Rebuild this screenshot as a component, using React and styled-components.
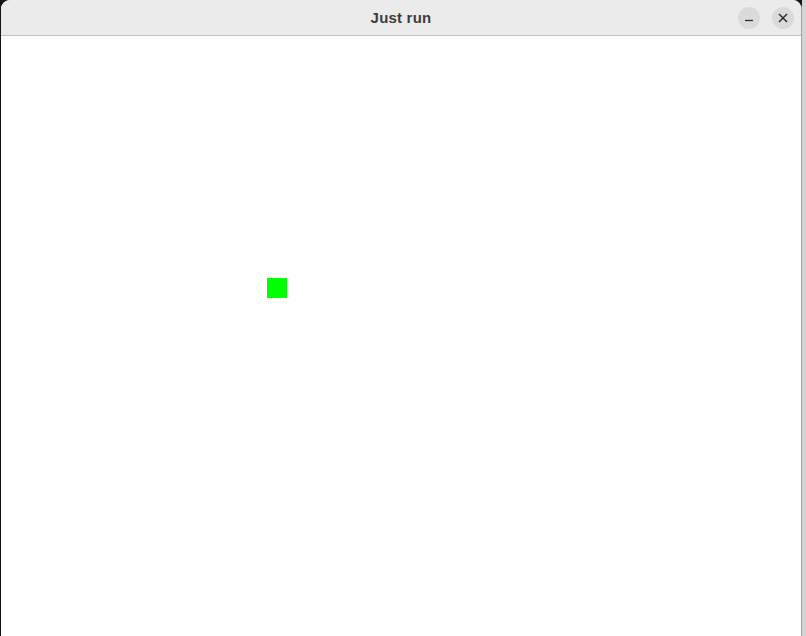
import React from "react";
import styled, { createGlobalStyle } from "styled-components";

const Global = createGlobalStyle`
  html, body { margin: 0; padding: 0; width: 806px; height: 636px; overflow: hidden; background: #161616; }
  #root { height: 636px; }
`;

const Screen = styled.div`
  display: flex;
  width: 806px;
  height: 636px;
`;

const LeftEdge = styled.div`
  width: 1px;
  background: #141414;
`;

const Window = styled.div`
  width: 800px;
  display: flex;
  flex-direction: column;
  background: #ffffff;
  border-top-left-radius: 9px;
  border-top-right-radius: 9px;
  overflow: hidden;
  border-right: 1px solid #a3a3a3;
`;

const RightShade = styled.div`
  flex: 1;
  background: #d4d4d4;
`;

const TitleBar = styled.div`
  height: 35px;
  flex: none;
  background: #ebebeb;
  border-bottom: 1px solid #c2c2c2;
  display: flex;
  align-items: center;
  justify-content: center;
  position: relative;
`;

const Title = styled.span`
  font-family: "Liberation Sans", "DejaVu Sans", sans-serif;
  font-weight: bold;
  font-size: 15px;
  letter-spacing: 0.2px;
  color: #3d3d3d;
`;

const Controls = styled.div`
  position: absolute;
  right: 7px;
  top: 7px;
  display: flex;
  gap: 12px;
`;

const CircleButton = styled.div`
  width: 22px;
  height: 22px;
  border-radius: 50%;
  background: #dadada;
  display: flex;
  align-items: center;
  justify-content: center;
`;

const Canvas = styled.div`
  flex: 1;
  position: relative;
  background: #ffffff;
`;

const Square = styled.div`
  position: absolute;
  left: 266px;
  top: 242px;
  width: 20px;
  height: 20px;
  background: #00ff00;
`;

export default function App() {
  return (
    <>
      <Global />
      <Screen>
        <LeftEdge />
        <Window>
          <TitleBar>
            <Title>Just run</Title>
            <Controls>
              <CircleButton>
                <svg width="10" height="10" viewBox="0 0 10 10">
                  <line x1="1" y1="7.5" x2="9" y2="7.5" stroke="#2e2e2e" strokeWidth="1.3" />
                </svg>
              </CircleButton>
              <CircleButton>
                <svg width="10" height="10" viewBox="0 0 10 10">
                  <path d="M1 1 L9 9 M9 1 L1 9" stroke="#2e2e2e" strokeWidth="1.5" />
                </svg>
              </CircleButton>
            </Controls>
          </TitleBar>
          <Canvas>
            <Square />
          </Canvas>
        </Window>
        <RightShade />
      </Screen>
    </>
  );
}
